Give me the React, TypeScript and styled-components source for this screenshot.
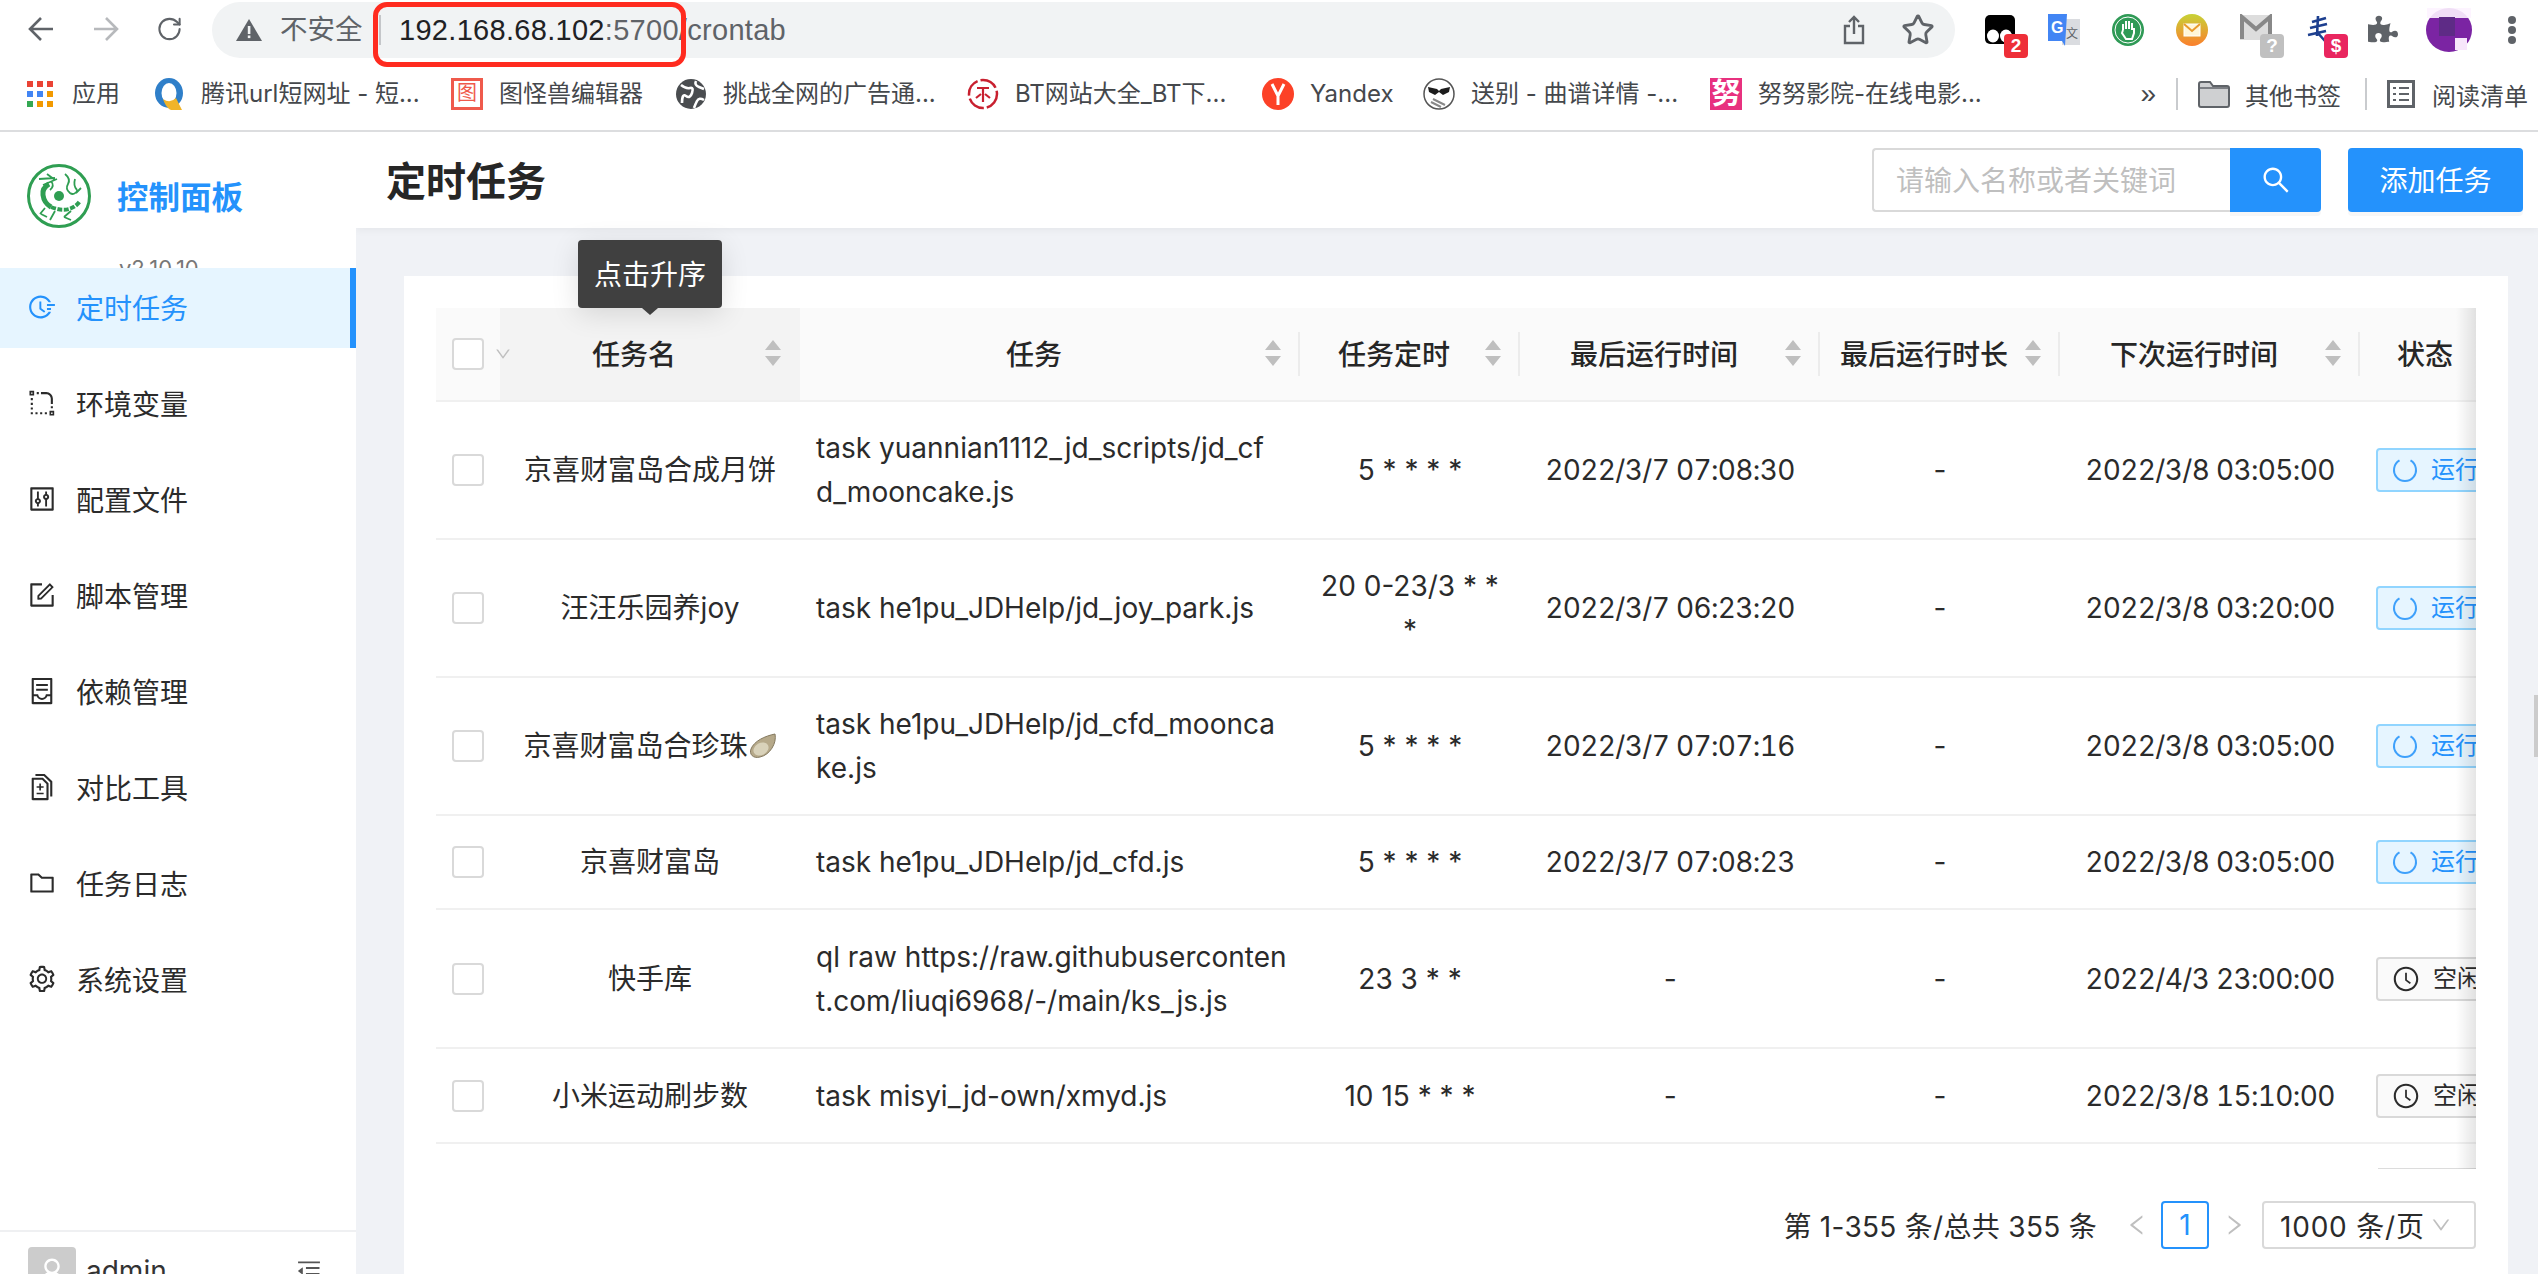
import React from "react";
import styled, { createGlobalStyle } from "styled-components";
import { RotateCw, Star } from "lucide-react";
import { FaPuzzlePiece } from "react-icons/fa";
import {
  AiOutlineFieldTime, AiOutlineRadiusSetting, AiOutlineControl, AiOutlineForm, AiOutlineContainer,
  AiOutlineDiff, AiOutlineFolder, AiOutlineSetting, AiOutlineSearch, AiOutlineClockCircle,
  AiOutlineDown, AiOutlineLeft, AiOutlineRight, AiOutlineMenuFold, AiOutlineUser,
} from "react-icons/ai";

const PRIMARY = "#2492fc";
const FONT = `Inter, "Noto Sans CJK SC", sans-serif`;
const COLS = "64px 300px 500px 220px 300px 240px 300px 130px";

const Global = createGlobalStyle`
  html, body { margin: 0; padding: 0; width: 2538px; height: 1274px; overflow: hidden; background: #f0f2f6; }
  * { box-sizing: border-box; }
  body { font-family: ${FONT}; color: #262626; }
`;

const Page = styled.div`
  width: 2538px; height: 1274px; display: flex; flex-direction: column; overflow: hidden; position: relative;
`;
const Chrome = styled.header`
  flex: none; height: 132px; background: #fff; border-bottom: 2px solid #dcdddf; display: flex; flex-direction: column;
`;
const Toolbar = styled.div`
  height: 58px; flex: none; display: flex; align-items: flex-start; padding-left: 27px; color: #5f6368;
`;
const NavButton = styled.div<{ $w: number; $gap?: number; $dim?: boolean }>`
  width: ${(p) => p.$w}px; height: 58px; flex: none; display: flex; align-items: center; justify-content: center;
  margin-left: ${(p) => p.$gap ?? 0}px;
  color: ${(p) => (p.$dim ? "#b7b9bc" : "#5f6368")};
`;
const AddressBar = styled.div`
  position: relative; width: 1743px; height: 56px; margin: 2px 0 0 29px; background: #f1f3f4; border-radius: 28px;
  display: flex; align-items: center; padding: 0 20px 0 24px; font-size: 27px; flex: none;
`;
const NotSafe = styled.span`
  margin-left: 18px; color: #5f6368; font-size: 27.5px; line-height: 1; white-space: nowrap; width: 99px;
`;
const AddrSep = styled.span`
  width: 2px; height: 30px; background: #c4c6c9; margin-right: 18px; flex: none;
`;
const Url = styled.span`
  color: #5f6368; white-space: nowrap; font-family: "Liberation Sans", sans-serif; font-size: 29px; line-height: 1; letter-spacing: 0.3px;
`;
const UrlHost = styled.b`
  color: #202124; font-weight: 400;
`;
const AddrActions = styled.div`
  margin-left: auto; display: flex; align-items: center; gap: 36px; color: #5f6368;
`;
const RedBox = styled.div`
  position: absolute; left: 161px; top: 0; width: 313px; height: 65px; border: 5px solid #ff2b1f; border-radius: 14px; pointer-events: none;
`;
const Extensions = styled.div`
  display: flex; margin-left: 29px; height: 58px; align-items: flex-start; flex: none;
`;
const Ext = styled.div`
  position: relative; width: 32px; height: 58px; margin-right: 32px; flex: none; padding-top: 14px;
`;
const ProfileExt = styled.div`
  width: 48px; height: 58px; margin-left: -7px; flex: none; padding-top: 14px;
`;
const Badge = styled.span<{ $bg: string }>`
  position: absolute; right: -12px; top: 34px; width: 24px; height: 24px; border-radius: 4px; background: ${(p) => p.$bg};
  color: #fff; font: 700 19px/24px "Liberation Sans", sans-serif; text-align: center;
`;
const Kebab = styled.div`
  margin-left: 35px; width: 8px; height: 58px; padding-top: 16px; display: flex; flex-direction: column; gap: 2px;
  & > i { display: block; width: 8px; height: 8px; border-radius: 50%; background: #5f6368; }
`;
const Bookmarks = styled.div`
  flex: 1; display: flex; align-items: center; padding-left: 24px; font-size: 24px; color: #45484c;
`;
const Bookmark = styled.div<{ $w: number }>`
  display: flex; align-items: center; gap: 16px; margin-right: 32px; flex: none;
  & > span { width: ${(p) => p.$w}px; white-space: nowrap; line-height: 32px; }
`;
const BookmarkEnd = styled.div`
  margin-left: auto; display: flex; align-items: center; height: 100%; flex: none;
`;
const MoreMark = styled.span`
  font-size: 28px; color: #45484c; margin-right: 20px; line-height: 1; font-family: "Liberation Sans", sans-serif;
`;
const BarSep = styled.i`
  display: block; width: 2px; height: 32px; background: #c9cbce; margin-right: 20px;
`;
const EndItem = styled.div`
  display: flex; align-items: center; gap: 15px; margin-right: 24px; white-space: nowrap;
  &:last-child { margin-right: 10px; gap: 17px; }
`;
const FavRed = styled.div`
  width: 32px; height: 32px; background: #ef5a4c; color: #ef5a4c; font-size: 20px; line-height: 24px; text-align: center; flex: none;
  padding: 3px; & > b { display: block; height: 26px; background: #fff; font-weight: 400; }
`;
const FavPink = styled.div`
  width: 32px; height: 32px; background: #e8317f; color: #fff; font-size: 29px; font-weight: 700; line-height: 32px; text-align: center; flex: none;
`;

const Body = styled.div`
  flex: 1; display: flex; min-height: 0;
`;
const Sidebar = styled.aside`
  width: 356px; flex: none; background: #fff; display: flex; flex-direction: column; overflow: hidden; height: 1142px;
`;
const Brand = styled.div`
  height: 136px; flex: none; overflow: hidden; padding: 32px 0 0 27px;
`;
const BrandRow = styled.div`
  display: flex; align-items: center; gap: 26px; height: 64px;
`;
const BrandTitle = styled.span`
  font-size: 31.5px; font-weight: 700; color: ${PRIMARY}; line-height: 1; margin-top: 4px;
`;
const Version = styled.div`
  margin: 26px 0 0 92px; font-size: 22px; color: #777; line-height: 28px;
`;
const Menu = styled.nav`
  height: 962px; flex: none; display: flex; flex-direction: column; gap: 16px;
`;
const MenuItem = styled.div<{ $active?: boolean }>`
  height: 80px; flex: none; display: flex; align-items: center; gap: 19px; padding: 0 0 3px 27px; font-size: 28px;
  background: ${(p) => (p.$active ? "#e6f5ff" : "transparent")};
  color: ${(p) => (p.$active ? PRIMARY : "#2b2b2b")};
  border-right: 6px solid ${(p) => (p.$active ? PRIMARY : "transparent")};
`;
const UserBar = styled.div`
  border-top: 2px solid #eff0f2; flex: none; padding: 15px 33px 0 28px; display: flex; align-items: flex-start; gap: 10px; font-size: 28px; height: 80px;
`;
const Avatar = styled.div`
  width: 48px; height: 48px; border-radius: 4px; background: #ccc; color: #fff; display: flex; align-items: center; justify-content: center; flex: none;
`;
const UserName = styled.span`
  line-height: 48px; flex: 1; color: #333;
`;
const Fold = styled.div`
  height: 48px; display: flex; align-items: center; color: #555;
`;

const Main = styled.main`
  flex: 1; min-width: 0; display: flex; flex-direction: column; overflow: hidden; position: relative;
`;
const TopBar = styled.div`
  height: 96px; flex: none; background: #fff; display: flex; align-items: center; padding: 0 15px 0 30px;
  box-shadow: 0 2px 8px rgba(0, 0, 0, 0.05); position: relative;
`;
const PageTitle = styled.h1`
  margin: 3px 0 0; font-size: 40px; font-weight: 600; color: #262626; line-height: 1;
`;
const SearchBox = styled.div`
  margin-left: auto; display: flex; height: 64px; width: 449px;
`;
const SearchInput = styled.div`
  flex: 1; border: 2px solid #d9d9d9; border-right: 0; border-radius: 4px 0 0 4px; color: #bfbfbf; font-size: 28px;
  display: flex; align-items: center; padding: 0 0 3px 22px; background: #fff;
`;
const SearchBtn = styled.div`
  width: 91px; background: ${PRIMARY}; color: #fff; border-radius: 0 4px 4px 0; display: flex; align-items: center; justify-content: center;
  box-shadow: 0 4px 0 rgba(0, 0, 0, 0.03);
`;
const AddBtn = styled.div`
  width: 175px; height: 64px; margin-left: 27px; padding-bottom: 3px; background: ${PRIMARY}; color: #fff; border-radius: 4px; font-size: 28px;
  display: flex; align-items: center; justify-content: center; box-shadow: 0 4px 0 rgba(0, 0, 0, 0.03);
`;
const Card = styled.section`
  margin: 48px 30px 0 48px; background: #fff; padding: 32px; flex: 1;
`;
const TableFrame = styled.div`
  position: relative;
`;
const TableClip = styled.div`
  overflow: hidden; position: relative;
`;
const EdgeShadow = styled.div`
  position: absolute; top: 0; right: 0; bottom: 0; width: 20px; background: linear-gradient(to left, rgba(0,0,0,0.1), rgba(0,0,0,0));
`;
const HeadRow = styled.div`
  display: grid; grid-template-columns: ${COLS}; width: 2154px; height: 94px; background: #fafafa; border-bottom: 2px solid #f0f0f0;
`;
const HeadCell = styled.div<{ $hover?: boolean; $divider?: boolean; $plain?: boolean }>`
  position: relative; display: flex; align-items: center; padding: ${(p) => (p.$plain ? "0 0 3px" : "0 19px 3px 3px")}; font-size: 28px; font-weight: 500; color: #262626;
  background: ${(p) => (p.$hover ? "#f3f3f3" : "transparent")};
  &::after {
    content: ""; display: ${(p) => (p.$divider ? "block" : "none")}; position: absolute; right: 0; top: 24px; width: 2px; height: 44px; background: #ececec;
  }
`;
const HeadTitle = styled.span`
  flex: 1; text-align: center; white-space: nowrap;
`;
const SelectCell = styled.div`
  position: relative; z-index: 1; display: flex; align-items: center; padding-left: 16px; gap: 10px; min-width: 0;
`;
const Check = styled.span`
  display: block; width: 32px; height: 32px; border: 2px solid #d9d9d9; border-radius: 4px; background: #fff; flex: none;
`;
const ChevronMuted = styled.span`
  color: #bfbfbf; display: flex; flex: none;
`;
const Row = styled.div<{ $nudge?: boolean }>`
  display: grid; grid-template-columns: ${COLS}; width: 2154px; border-bottom: 2px solid #f0f0f0; font-size: 28px; line-height: 44px;
  padding-top: ${(p) => (p.$nudge ? 1 : 0)}px;
`;
const Cell = styled.div<{ $left?: boolean; $date?: boolean }>`
  padding: 24px 16px; display: flex; align-items: center; justify-content: ${(p) => (p.$left ? "flex-start" : "center")};
  text-align: ${(p) => (p.$left ? "left" : "center")}; white-space: nowrap; color: #2b2b2b;
  font-variant-numeric: ${(p) => (p.$date ? "tabular-nums" : "normal")};
  letter-spacing: ${(p) => (p.$date ? "-0.66px" : "normal")};
`;
const RowCheck = styled.div`
  display: flex; align-items: center; padding-left: 16px;
`;
const StatusCell = styled.div`
  display: flex; align-items: center; padding-left: 16px;
`;
const Tag = styled.div<{ $run?: boolean }>`
  height: 44px; width: 150px; flex: none; display: flex; align-items: center; gap: 13px; padding-left: 14px; font-size: 24px; line-height: 1;
  border: 2px solid ${(p) => (p.$run ? "#91d5ff" : "#d9d9d9")}; border-radius: 4px;
  background: ${(p) => (p.$run ? "#e6f5ff" : "#fafafa")};
  color: ${(p) => (p.$run ? PRIMARY : "#2b2b2b")};
`;
const TableTail = styled.div`
  height: 25px; padding-left: 1942px; display: flex; align-items: flex-end;
  & > i { display: block; width: 100px; height: 1px; background: #dcdcdc; }
`;
const Tip = styled.div`
  position: absolute; left: 142px; top: -68px; width: 144px; height: 68px; padding-bottom: 2px; background: #404040; color: #fff; border-radius: 4px;
  font-size: 28px; display: flex; align-items: center; justify-content: center; box-shadow: 0 6px 28px rgba(0, 0, 0, 0.12); z-index: 2;
  &::after {
    content: ""; position: absolute; left: 64px; bottom: -7px; width: 0; height: 0;
    border-left: 8px solid transparent; border-right: 8px solid transparent; border-top: 7px solid #404040;
  }
`;
const Pager = styled.div`
  margin-top: 32px; display: flex; align-items: center; justify-content: flex-end; height: 48px; font-size: 28px;
`;
const PagerTotal = styled.span`
  margin-right: 16px; color: #2b2b2b; white-space: nowrap; letter-spacing: 0.3px;
`;
const PagerArrow = styled.span<{ $gap?: number }>`
  width: 48px; height: 48px; margin-left: ${(p) => p.$gap ?? 0}px; display: flex; align-items: center; justify-content: center; color: #bfbfbf;
`;
const PageBox = styled.span`
  width: 48px; height: 48px; border: 2px solid ${PRIMARY}; border-radius: 4px; color: ${PRIMARY}; display: flex; align-items: center; justify-content: center;
`;
const PageSize = styled.div`
  width: 214px; height: 48px; margin-left: 4px; border: 2px solid #d9d9d9; border-radius: 4px; display: flex; align-items: center;
  justify-content: space-between; padding: 0 22px 0 16px; color: #2b2b2b; letter-spacing: 0.8px;
`;
const ScrollThumb = styled.div`
  position: absolute; right: 0; top: 563px; width: 4px; height: 62px; background: #ccc;
`;
const LogoSvg = styled.svg`
  flex: none; display: block;
`;
const OysterSvg = styled.svg`
  flex: none; display: block; margin-left: 1px;
`;
const ProfileSvg = styled.svg`
  display: block; margin-top: -6px;
`;
const FlipSvg = styled.svg<{ $flip?: boolean }>`
  display: block; transform: ${(p) => (p.$flip ? "scaleX(-1)" : "none")};
`;

const Back = ({ flip }: { flip?: boolean }) => (
  <FlipSvg $flip={flip} width="28" height="28" viewBox="0 0 28 28" fill="none" stroke="currentColor" strokeWidth="2.6">
    <path d="M26 14H3M14 3L3 14l11 11" />
  </FlipSvg>
);
const Warn = () => (
  <svg width="26" height="22" viewBox="0 0 26 22">
    <path d="M13 0l13 22H0z" fill="#5f6368" />
    <rect x="11.8" y="7" width="2.6" height="8" fill="#f1f3f4" />
    <rect x="11.8" y="16.5" width="2.6" height="2.6" fill="#f1f3f4" />
  </svg>
);
const Share = () => (
  <svg width="22" height="30" viewBox="0 0 22 30" fill="none" stroke="#5f6368" strokeWidth="2.4">
    <path d="M7 11H2v17h18V11h-5M11 19V2M6 7l5-5 5 5" />
  </svg>
);
const Spinner = () => (
  <LogoSvg width="26" height="26" viewBox="0 0 26 26" fill="none" stroke="#3ea0fb" strokeWidth="2">
    <path d="M18.5 3.47A11 11 0 1 1 7.5 3.47" />
  </LogoSvg>
);
const GridFav = () => {
  const c = ["#ea4335", "#ea4335", "#ea4335", "#4285f4", "#4285f4", "#f29900", "#34a853", "#f29900", "#f29900"];
  return (
    <LogoSvg width="32" height="32" viewBox="0 0 32 32">
      {c.map((f, i) => (
        <rect key={i} x={3 + (i % 3) * 10} y={3 + Math.floor(i / 3) * 10} width="6" height="6" fill={f} />
      ))}
    </LogoSvg>
  );
};
const QFav = () => (
  <LogoSvg width="32" height="32" viewBox="0 0 32 32">
    <ellipse cx="16" cy="15" rx="14" ry="15" fill="#2f7fc9" />
    <ellipse cx="16" cy="15" rx="7.5" ry="10" fill="#fff" />
    <path d="M10 21q7 5 13-1l6 12H18q-5-2-8-11z" fill="#f0b429" />
  </LogoSvg>
);
const GlobeFav = () => (
  <LogoSvg width="32" height="32" viewBox="0 0 32 32">
    <circle cx="16" cy="16" r="15" fill="#4a4d50" />
    <path d="M6 7q5 4 9 3t2 5-6 3-4 7M21 3q-2 4 3 6t5 2M29 22q-5-3-7 1t-3 7" stroke="#fff" strokeWidth="2.6" fill="none" />
  </LogoSvg>
);
const BtFav = () => (
  <LogoSvg width="32" height="32" viewBox="0 0 32 32">
    <circle cx="16" cy="16" r="14" fill="none" stroke="#c8202f" strokeWidth="2.5" strokeDasharray="18 3" />
    <path d="M10 10h12M16 10v14M9 20l5-4M23 20l-5-4" stroke="#c8202f" strokeWidth="2.2" fill="none" />
  </LogoSvg>
);
const YFav = () => (
  <LogoSvg width="32" height="32" viewBox="0 0 32 32">
    <circle cx="16" cy="16" r="16" fill="#fc4127" />
    <path d="M10 6l6 12 6-12M16 18v9" stroke="#fff" strokeWidth="3" fill="none" />
  </LogoSvg>
);
const ShadeFav = () => (
  <LogoSvg width="32" height="32" viewBox="0 0 32 32">
    <circle cx="16" cy="16" r="15" fill="#fff" stroke="#555" strokeWidth="1.5" />
    <path d="M5 9l9 2 2 2 2-2 9-2-1 5-6 3-4-3-4 3-6-3z" fill="#1c1c1c" />
    <path d="M10 21l12 6M8 24l10 5" stroke="#888" strokeWidth="2" />
  </LogoSvg>
);
const Folder = () => (
  <LogoSvg width="32" height="28" viewBox="0 0 32 28">
    <path d="M1 4a2 2 0 0 1 2-2h9l3 4h14a2 2 0 0 1 2 2v17a2 2 0 0 1-2 2H3a2 2 0 0 1-2-2z" fill="#cfd0d2" stroke="#5f6368" strokeWidth="2" />
    <path d="M1 8h30" stroke="#5f6368" strokeWidth="1.5" />
  </LogoSvg>
);
const ReadList = () => (
  <LogoSvg width="28" height="28" viewBox="0 0 28 28" fill="none" stroke="#5f6368">
    <rect x="1.5" y="1.5" width="25" height="25" strokeWidth="3" />
    <path d="M6 8h3M12 8h10M6 14h3M12 14h10M6 20h3M12 20h10" strokeWidth="2" />
  </LogoSvg>
);
const BlackExt = () => (
  <LogoSvg width="32" height="30" viewBox="0 0 32 30">
    <rect x="1" y="1" width="30" height="29" rx="5" fill="#000" />
    <ellipse cx="9" cy="22" rx="6" ry="6.5" fill="#fff" />
    <ellipse cx="22" cy="22" rx="6" ry="6.5" fill="#fff" />
  </LogoSvg>
);
const TranslateExt = () => (
  <LogoSvg width="32" height="32" viewBox="0 0 32 32">
    <rect x="14" y="5" width="18" height="26" fill="#dadce0" />
    <path d="M0 0h19l-2 32-3-5H0z" fill="#4285f4" />
    <text x="3" y="19" fill="#fff" fontFamily="Liberation Sans" fontWeight="700" fontSize="16">G</text>
    <text x="18" y="24" fill="#5f6368" fontFamily="Noto Sans CJK SC" fontSize="12">文</text>
  </LogoSvg>
);
const HandExt = () => (
  <LogoSvg width="32" height="32" viewBox="0 0 32 32">
    <circle cx="16" cy="16" r="16" fill="#2f9a56" />
    <circle cx="16" cy="16" r="13" fill="none" stroke="#fff" strokeWidth="1" />
    <path d="M11 16v-6M14 15V7M17 15V7M20 16V9M11 16l-1 3 4 6h6l2-6v-5" stroke="#fff" strokeWidth="2" fill="none" />
  </LogoSvg>
);
const MailExt = () => (
  <LogoSvg width="32" height="32" viewBox="0 0 32 32">
    <defs>
      <linearGradient id="mg" x1="0" y1="0" x2="0" y2="1">
        <stop offset="0" stopColor="#c7d236" />
        <stop offset="1" stopColor="#fb7f2d" />
      </linearGradient>
    </defs>
    <circle cx="16" cy="16" r="16" fill="url(#mg)" />
    <rect x="8" y="10" width="16" height="12" fill="#fff6d8" stroke="#fff" />
    <path d="M8 10l8 7 8-7" stroke="#e89a2a" strokeWidth="2" fill="none" />
  </LogoSvg>
);
const GmailExt = () => (
  <LogoSvg width="32" height="26" viewBox="0 0 32 26">
    <rect x="0" y="1" width="32" height="25" fill="#ddd" />
    <path d="M2 25V3l14 12L30 3v22" stroke="#888" strokeWidth="4" fill="none" />
  </LogoSvg>
);
const ScribbleExt = () => (
  <LogoSvg width="32" height="30" viewBox="0 0 32 30">
    <path d="M8 8l14-4M6 14l17-4M4 21l18-4M14 2l-1 20M13 18l8 9" stroke="#1d3f8f" strokeWidth="2.6" fill="none" />
  </LogoSvg>
);
const ProfileAvatar = () => (
  <ProfileSvg width="48" height="44" viewBox="0 0 48 44">
    <ellipse cx="24" cy="22" rx="23" ry="22" fill="#7b24a3" />
    <rect x="2" y="0" width="44" height="10" fill="#fdf3ff" opacity="0.9" />
    <rect x="14" y="9" width="16" height="19" fill="#5e2b86" />
    <rect x="30" y="30" width="12" height="12" fill="#f7e6fb" />
  </ProfileSvg>
);
const Logo = () => (
  <LogoSvg width="64" height="64" viewBox="0 0 64 64" fill="none" stroke="#2f9e52">
    <circle cx="32" cy="32" r="30.5" strokeWidth="3" fill="#fff" />
    <circle cx="32" cy="32" r="5" fill="#2f9e52" stroke="none" />
    <path d="M22 20q-7 4-6 11 1 8 8 12" strokeWidth="5" />
    <path d="M24 43q10 4 18 2 7-2 11-8" strokeWidth="4" strokeDasharray="5 1.5" />
    <path d="M12 15l16-1M16 21l14-6M20 10l8 6M24 17q4 5-1 9" strokeWidth="1.8" />
    <path d="M38 10q6 5 3 10t2 9q4 3 8-3M48 15q-2 7 2 11M54 24l-5 5" strokeWidth="1.8" />
    <path d="M18 44l-5 6M14 50l6 3M28 47l-5 9M44 47l-7 6M37 53l7 3" strokeWidth="1.8" />
  </LogoSvg>
);
const Oyster = () => (
  <OysterSvg width="28" height="26" viewBox="0 0 28 26">
    <path d="M26 1c2 9-5 21-15 23C4 26 0 21 2 16 5 8 16 3 26 1z" fill="#b6a98a" stroke="#84795f" strokeWidth="1" />
    <ellipse cx="12" cy="16" rx="8" ry="6" transform="rotate(-30 12 16)" fill="#d9d2ba" />
  </OysterSvg>
);
const Sorter = () => (
  <LogoSvg width="16" height="26" viewBox="0 0 16 26" fill="#bfbfbf">
    <path d="M8 0l8 10H0zM8 26l8-10H0z" />
  </LogoSvg>
);

const menu = [
  { icon: AiOutlineFieldTime, label: "定时任务", active: true },
  { icon: AiOutlineRadiusSetting, label: "环境变量" },
  { icon: AiOutlineControl, label: "配置文件" },
  { icon: AiOutlineForm, label: "脚本管理" },
  { icon: AiOutlineContainer, label: "依赖管理" },
  { icon: AiOutlineDiff, label: "对比工具" },
  { icon: AiOutlineFolder, label: "任务日志" },
  { icon: AiOutlineSetting, label: "系统设置" },
];

const heads = [
  { t: "任务名", hover: true },
  { t: "任务", divider: true },
  { t: "任务定时", divider: true },
  { t: "最后运行时间", divider: true },
  { t: "最后运行时长", divider: true },
  { t: "下次运行时间", divider: true },
];

type R = { name: React.ReactNode; task: string[]; cron: string[]; last: string; next: string; run: boolean };
const rows: R[] = [
  { name: "京喜财富岛合成月饼", task: ["task yuannian1112_jd_scripts/jd_cf", "d_mooncake.js"], cron: ["5 * * * *"], last: "2022/3/7 07:08:30", next: "2022/3/8 03:05:00", run: true },
  { name: "汪汪乐园养joy", task: ["task he1pu_JDHelp/jd_joy_park.js"], cron: ["20 0-23/3 * *", "*"], last: "2022/3/7 06:23:20", next: "2022/3/8 03:20:00", run: true },
  { name: <>京喜财富岛合珍珠<Oyster /></>, task: ["task he1pu_JDHelp/jd_cfd_moonca", "ke.js"], cron: ["5 * * * *"], last: "2022/3/7 07:07:16", next: "2022/3/8 03:05:00", run: true },
  { name: "京喜财富岛", task: ["task he1pu_JDHelp/jd_cfd.js"], cron: ["5 * * * *"], last: "2022/3/7 07:08:23", next: "2022/3/8 03:05:00", run: true },
  { name: "快手库", task: ["ql raw https://raw.githubuserconten", "t.com/liuqi6968/-/main/ks_js.js"], cron: ["23 3 * *"], last: "-", next: "2022/4/3 23:00:00", run: false },
  { name: "小米运动刷步数", task: ["task misyi_jd-own/xmyd.js"], cron: ["10 15 * * *"], last: "-", next: "2022/3/8 15:10:00", run: false },
];

const bookmarks = [
  { fav: <GridFav />, text: "应用", w: 49 },
  { fav: <QFav />, text: "腾讯url短网址 - 短...", w: 218 },
  { fav: <FavRed><b>图</b></FavRed>, text: "图怪兽编辑器", w: 144 },
  { fav: <GlobeFav />, text: "挑战全网的广告通...", w: 212 },
  { fav: <BtFav />, text: "BT网站大全_BT下...", w: 215 },
  { fav: <YFav />, text: "Yandex", w: 81 },
  { fav: <ShadeFav />, text: "送别 - 曲谱详情 -...", w: 207 },
  { fav: <FavPink>努</FavPink>, text: "努努影院-在线电影...", w: 224 },
];

export default function App() {
  return (
    <Page>
      <Global />
      <Chrome>
        <Toolbar>
          <NavButton $w={28}><Back /></NavButton>
          <NavButton $w={28} $gap={37} $dim><Back flip /></NavButton>
          <NavButton $w={27} $gap={36}><RotateCw size={36} strokeWidth={1.8} /></NavButton>
          <AddressBar>
            <Warn />
            <NotSafe>不安全</NotSafe>
            <AddrSep />
            <Url><UrlHost>192.168.68.102</UrlHost>:5700/crontab</Url>
            <AddrActions>
              <Share />
              <Star size={34} strokeWidth={2} />
            </AddrActions>
            <RedBox />
          </AddressBar>
          <Extensions>
            <Ext><BlackExt /><Badge $bg="#ee2f38">2</Badge></Ext>
            <Ext><TranslateExt /></Ext>
            <Ext><HandExt /></Ext>
            <Ext><MailExt /></Ext>
            <Ext><GmailExt /><Badge $bg="#c0c0c0">?</Badge></Ext>
            <Ext><ScribbleExt /><Badge $bg="#e9265f">$</Badge></Ext>
            <Ext><FaPuzzlePiece size={30} color="#5f6368" /></Ext>
            <ProfileExt><ProfileAvatar /></ProfileExt>
            <Kebab><i /><i /><i /></Kebab>
          </Extensions>
        </Toolbar>
        <Bookmarks>
          {bookmarks.map((b, i) => (
            <Bookmark key={i} $w={b.w}>
              {b.fav}
              <span>{b.text}</span>
            </Bookmark>
          ))}
          <BookmarkEnd>
            <MoreMark>»</MoreMark>
            <BarSep />
            <EndItem><Folder />其他书签</EndItem>
            <BarSep />
            <EndItem><ReadList />阅读清单</EndItem>
          </BookmarkEnd>
        </Bookmarks>
      </Chrome>
      <Body>
        <Sidebar>
          <Brand>
            <BrandRow>
              <Logo />
              <BrandTitle>控制面板</BrandTitle>
            </BrandRow>
            <Version>v2.10.10</Version>
          </Brand>
          <Menu>
            {menu.map((m) => (
              <MenuItem key={m.label} $active={m.active}>
                <m.icon size={30} />
                {m.label}
              </MenuItem>
            ))}
          </Menu>
          <UserBar>
            <Avatar><AiOutlineUser size={32} /></Avatar>
            <UserName>admin</UserName>
            <Fold><AiOutlineMenuFold size={28} /></Fold>
          </UserBar>
        </Sidebar>
        <Main>
          <TopBar>
            <PageTitle>定时任务</PageTitle>
            <SearchBox>
              <SearchInput>请输入名称或者关键词</SearchInput>
              <SearchBtn><AiOutlineSearch size={32} /></SearchBtn>
            </SearchBox>
            <AddBtn>添加任务</AddBtn>
          </TopBar>
          <Card>
            <TableFrame>
              <Tip>点击升序</Tip>
              <TableClip>
                <HeadRow>
                  <SelectCell><Check /><ChevronMuted><AiOutlineDown size={18} /></ChevronMuted></SelectCell>
                  {heads.map((h) => (
                    <HeadCell key={h.t} $hover={h.hover} $divider={h.divider}>
                      <HeadTitle>{h.t}</HeadTitle>
                      <Sorter />
                    </HeadCell>
                  ))}
                  <HeadCell $plain><HeadTitle>状态</HeadTitle></HeadCell>
                </HeadRow>
                {rows.map((r, i) => (
                  <Row key={i} $nudge={i >= 4}>
                    <RowCheck><Check /></RowCheck>
                    <Cell>{r.name}</Cell>
                    <Cell $left><div>{r.task.map((l, j) => <div key={j}>{l}</div>)}</div></Cell>
                    <Cell><div>{r.cron.map((l, j) => <div key={j}>{l}</div>)}</div></Cell>
                    <Cell $date>{r.last}</Cell>
                    <Cell>-</Cell>
                    <Cell $date>{r.next}</Cell>
                    <StatusCell>
                      {r.run ? (
                        <Tag $run><Spinner />运行中</Tag>
                      ) : (
                        <Tag><AiOutlineClockCircle size={28} />空闲中</Tag>
                      )}
                    </StatusCell>
                  </Row>
                ))}
                <TableTail><i /></TableTail>
                <EdgeShadow />
              </TableClip>
            </TableFrame>
            <Pager>
              <PagerTotal>第 1-355 条/总共 355 条</PagerTotal>
              <PagerArrow><AiOutlineLeft size={26} /></PagerArrow>
              <PageBox>1</PageBox>
              <PagerArrow $gap={1}><AiOutlineRight size={26} /></PagerArrow>
              <PageSize>1000 条/页<ChevronMuted><AiOutlineDown size={22} /></ChevronMuted></PageSize>
            </Pager>
          </Card>
          <ScrollThumb />
        </Main>
      </Body>
    </Page>
  );
}
